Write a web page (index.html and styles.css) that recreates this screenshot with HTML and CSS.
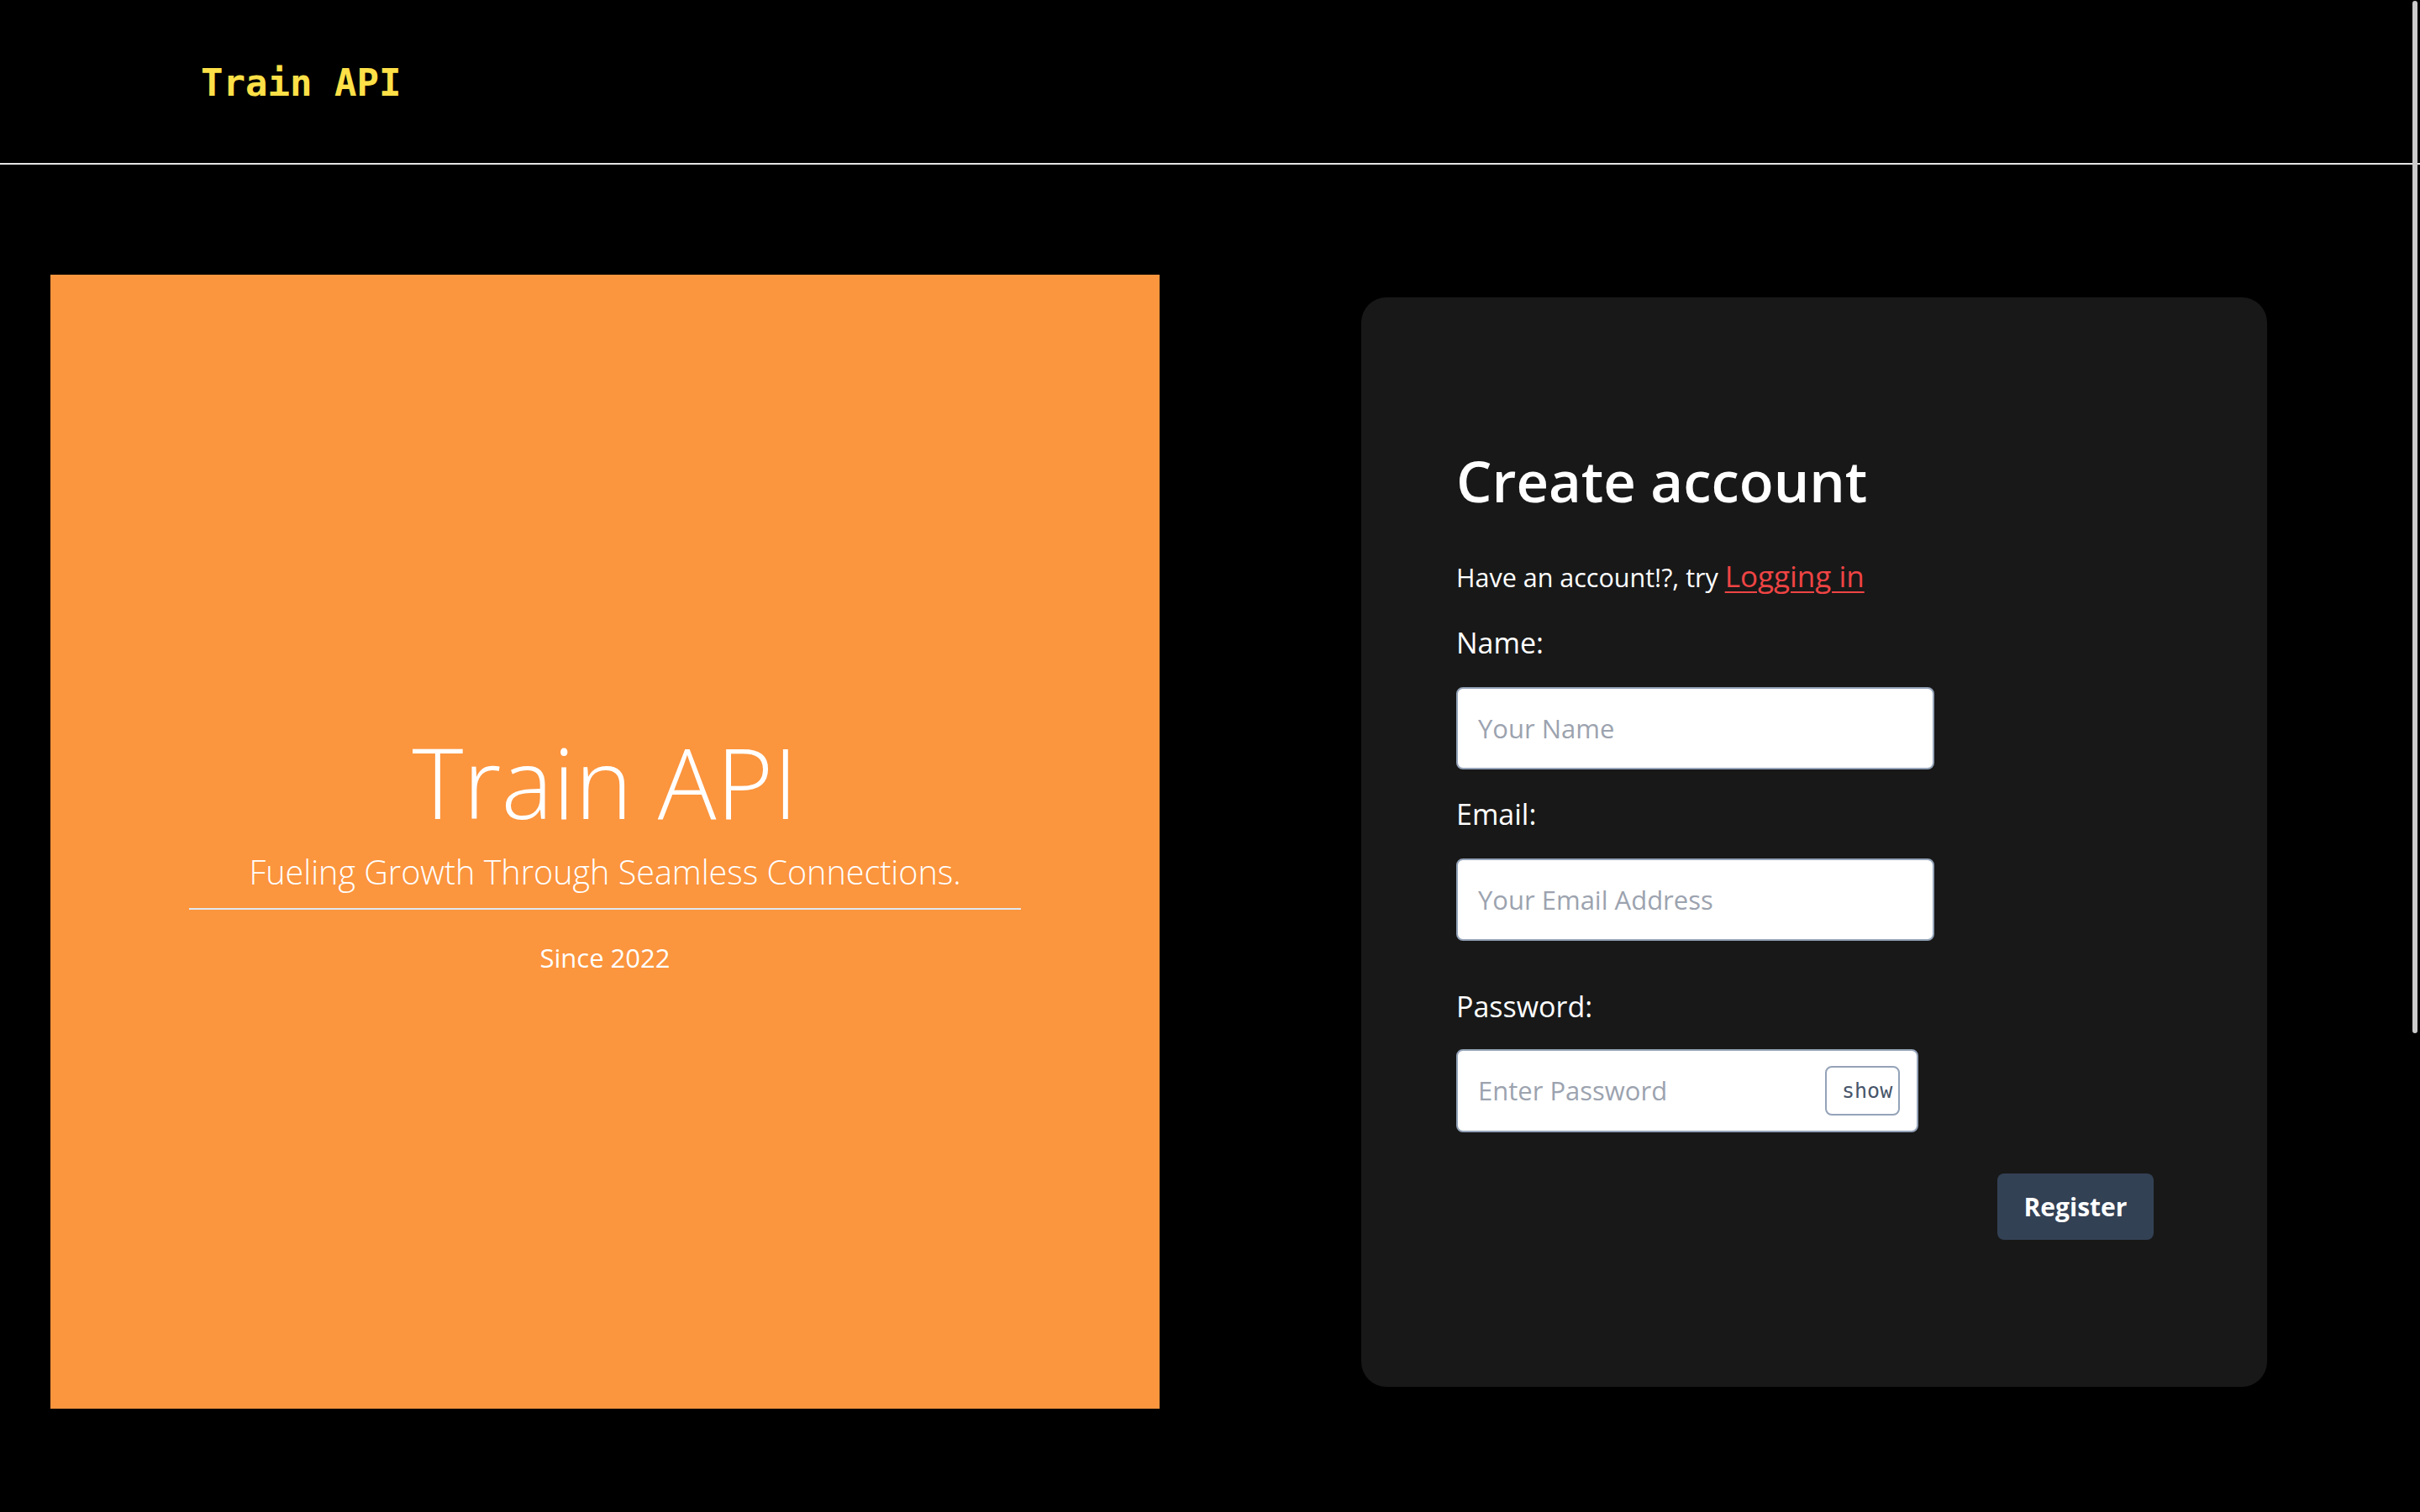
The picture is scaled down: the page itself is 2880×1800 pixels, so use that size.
FILE: index.html
```html
<!DOCTYPE html>
<html lang="en">
<head>
<meta charset="utf-8">
<title>Train API - Create account</title>
<link rel="stylesheet" href="styles.css">
</head>
<body>
<header class="topbar">
  <span class="brand">Train API</span>
</header>
<main class="page">
  <section class="hero">
    <div class="hero-inner">
      <h1 class="hero-title">Train API</h1>
      <p class="hero-sub">Fueling Growth Through Seamless Connections.</p>
      <hr class="hero-rule">
      <p class="hero-since">Since 2022</p>
    </div>
  </section>
  <section class="card">
    <h2 class="card-title">Create account</h2>
    <p class="card-hint">Have an account!?, try <a href="#" class="link">Logging in</a></p>
    <form class="form">
      <label class="label" for="name">Name:</label>
      <input class="field" id="name" type="text" placeholder="Your Name">
      <label class="label label-email" for="email">Email:</label>
      <input class="field" id="email" type="email" placeholder="Your Email Address">
      <label class="label label-pw" for="pw">Password:</label>
      <div class="pw">
        <input class="pw-input" id="pw" type="password" placeholder="Enter Password">
        <button type="button" class="show-btn">show</button>
      </div>
      <div class="actions">
        <button type="button" class="register">Register</button>
      </div>
    </form>
  </section>
</main>
<div class="scroll-thumb" aria-hidden="true"></div>
</body>
</html>
```
FILE: styles.css
```css
html {
  background: #000;
}
body {
  margin: 0;
  background: #000;
  color: #fff;
  font-family: "Open Sans", "Noto Sans", sans-serif;
}

/* overlay scrollbar thumb */
.scroll-thumb {
  position: fixed;
  top: 1px;
  right: 3px;
  width: 6px;
  height: 1229px;
  border-radius: 3px;
  background: #cbcbcb;
}

.topbar {
  height: 192px;
  border-bottom: 2px solid #e5e5e5;
  display: flex;
  align-items: center;
  padding-left: 239px;
  padding-top: 2px;
  box-sizing: content-box;
}
.brand {
  font-family: "DejaVu Sans Mono", "Liberation Mono", monospace;
  font-weight: 700;
  font-size: 44px;
  color: #fde047;
}

.page {
  display: flex;
  align-items: center;
  gap: 240px;
  padding: 131px 0 0 60px;
}

.hero {
  width: 1320px;
  height: 1350px;
  flex: none;
  background: #fb953e;
  display: flex;
  align-items: center;
  justify-content: center;
  padding-top: 16px;
  box-sizing: border-box;
}
.hero-inner {
  width: 100%;
  display: flex;
  flex-direction: column;
  align-items: center;
  text-align: center;
}
.hero-title {
  margin: 0;
  font-weight: 300;
  font-size: 116px;
  line-height: 140px;
}
.hero-sub {
  margin: 13px 0 0;
  font-weight: 300;
  font-size: 39.5px;
  line-height: 50px;
}
.hero-rule {
  width: 75%;
  margin: 18px 0 0;
  border: 0;
  height: 2px;
  background: #e2e8f0;
}
.hero-since {
  margin: 37px 0 0;
  font-size: 31px;
  line-height: 40px;
}

.card {
  width: 1078px;
  flex: none;
  box-sizing: border-box;
  background: #181818;
  border-radius: 30px;
  padding: 178px 135px 175px 113px;
}
.card-title {
  margin: 0;
  font-weight: 600;
  font-size: 67px;
  line-height: 80px;
}
.card-hint {
  margin: 54px 0 0;
  font-size: 30.5px;
  line-height: 40px;
}
.link {
  font-size: 35px;
  color: #ef4444;
  text-decoration: underline;
  text-underline-offset: 5px;
  text-decoration-thickness: 2px;
}

.form {
  margin-top: 36px;
  display: flex;
  flex-direction: column;
  align-items: flex-start;
}
.label {
  font-size: 34px;
  line-height: 44px;
}
.label-email {
  margin-top: 31px;
}
.label-pw {
  margin-top: 56px;
}
.field {
  margin-top: 31px;
  width: 569px;
  height: 98px;
  box-sizing: border-box;
  border: 2px solid #94a3b8;
  border-radius: 8px;
  background: #fff;
  padding: 0 24px;
  font-family: "Open Sans", "Noto Sans", sans-serif;
  font-size: 31px;
  color: #111;
  outline: none;
}
.field::placeholder,
.pw-input::placeholder {
  color: #9ca3af;
}
.pw {
  margin-top: 29px;
  width: 550px;
  height: 99px;
  box-sizing: border-box;
  border: 2px solid #94a3b8;
  border-radius: 8px;
  background: #fff;
  display: flex;
  align-items: center;
  padding: 0 20px 0 24px;
}
.pw-input {
  flex: 1;
  min-width: 0;
  border: 0;
  outline: none;
  background: transparent;
  padding: 0;
  font-family: "Open Sans", "Noto Sans", sans-serif;
  font-size: 31px;
  color: #111;
}
.show-btn {
  flex: none;
  width: 89px;
  height: 59px;
  box-sizing: border-box;
  border: 2px solid #94a3b8;
  border-radius: 8px;
  background: #fff;
  padding: 0 0 0 18px;
  text-align: left;
  font-family: "DejaVu Sans Mono", "Liberation Mono", monospace;
  font-size: 25px;
  color: #475569;
}
.actions {
  margin-top: 49px;
  align-self: stretch;
  display: flex;
  justify-content: flex-end;
}
.register {
  width: 186px;
  height: 79px;
  border: 0;
  border-radius: 8px;
  background: #334155;
  color: #fff;
  font-family: "Open Sans", "Noto Sans", sans-serif;
  font-weight: 700;
  font-size: 30px;
}
```
